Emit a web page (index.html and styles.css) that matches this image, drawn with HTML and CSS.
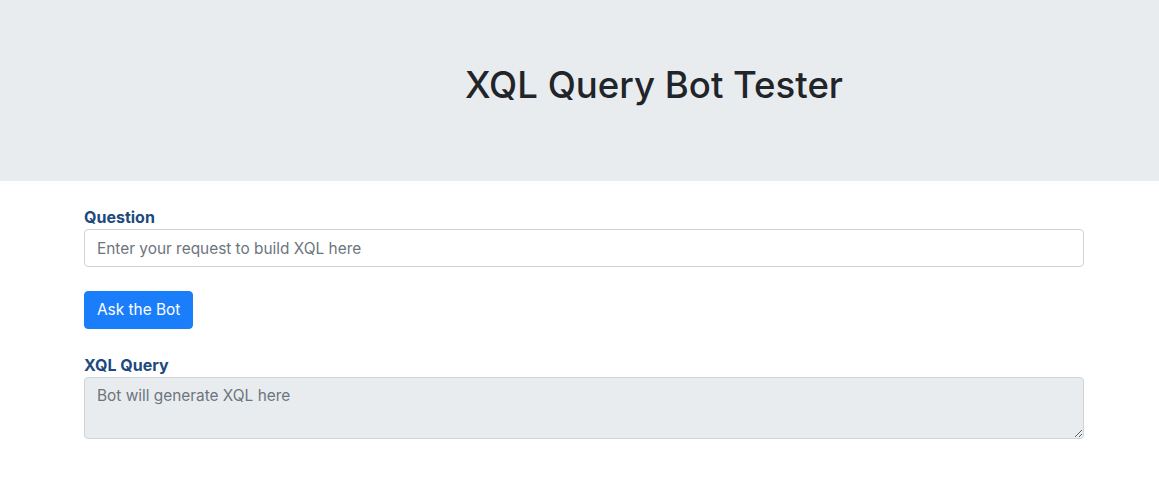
FILE: index.html
```html
<!DOCTYPE html>
<html lang="en">
<head>
<meta charset="utf-8">
<title>XQL Query Bot Tester</title>
<link rel="stylesheet" href="styles.css">
</head>
<body>
<header class="jumbotron">
  <h1 class="title">XQL Query Bot Tester</h1>
</header>
<main class="container">
  <div class="form-group">
    <label class="label" for="q">Question</label>
    <input class="input" id="q" type="text" placeholder="Enter your request to build XQL here">
  </div>
  <button class="btn" type="button">Ask the Bot</button>
  <div class="form-group result">
    <label class="label" for="r">XQL Query</label>
    <textarea class="input textarea" id="r" readonly placeholder="Bot will generate XQL here"></textarea>
  </div>
</main>
</body>
</html>
```
FILE: styles.css
```css
* { box-sizing: border-box; }
html, body { margin: 0; padding: 0; }
body {
  font-family: Inter, "Liberation Sans", Arial, sans-serif;
  font-size: 16px;
  line-height: 1.5;
  color: #212529;
  background: #fff;
}
.jumbotron {
  background: #e9ecef;
  height: 181px;
  padding: 64px 0 0 149px;
  text-align: center;
}
.title {
  margin: 0;
  font-size: 36.6px;
  font-weight: 500;
  line-height: 1.2;
  color: #212529;
}
.container {
  width: 1000px;
  margin-left: 84px;
  padding-top: 24px;
  display: flex;
  flex-direction: column;
  align-items: flex-start;
}
.form-group {
  display: flex;
  flex-direction: column;
  width: 100%;
}
.label {
  font-weight: 700;
  color: #1d4a7e;
  font-size: 16px;
  line-height: 24px;
}
.input {
  width: 100%;
  height: 38px;
  padding: 6px 12px;
  font-family: inherit;
  font-size: 15.4px;
  line-height: 24px;
  color: #495057;
  background: #fff;
  border: 1px solid #ced4da;
  border-radius: 4px;
  outline: none;
}
.input::placeholder { color: #6c757d; opacity: 1; }
.textarea {
  height: 62px;
  background: #e9ecef;
  resize: vertical;
  display: block;
}
.btn {
  margin-top: 24px;
  height: 38px;
  padding: 6px 12px;
  font-family: inherit;
  font-size: 15.4px;
  line-height: 24px;
  color: #fff;
  background: #1a7efb;
  border: 1px solid #1a7efb;
  border-radius: 4px;
}
.result { margin-top: 24px; }
```
